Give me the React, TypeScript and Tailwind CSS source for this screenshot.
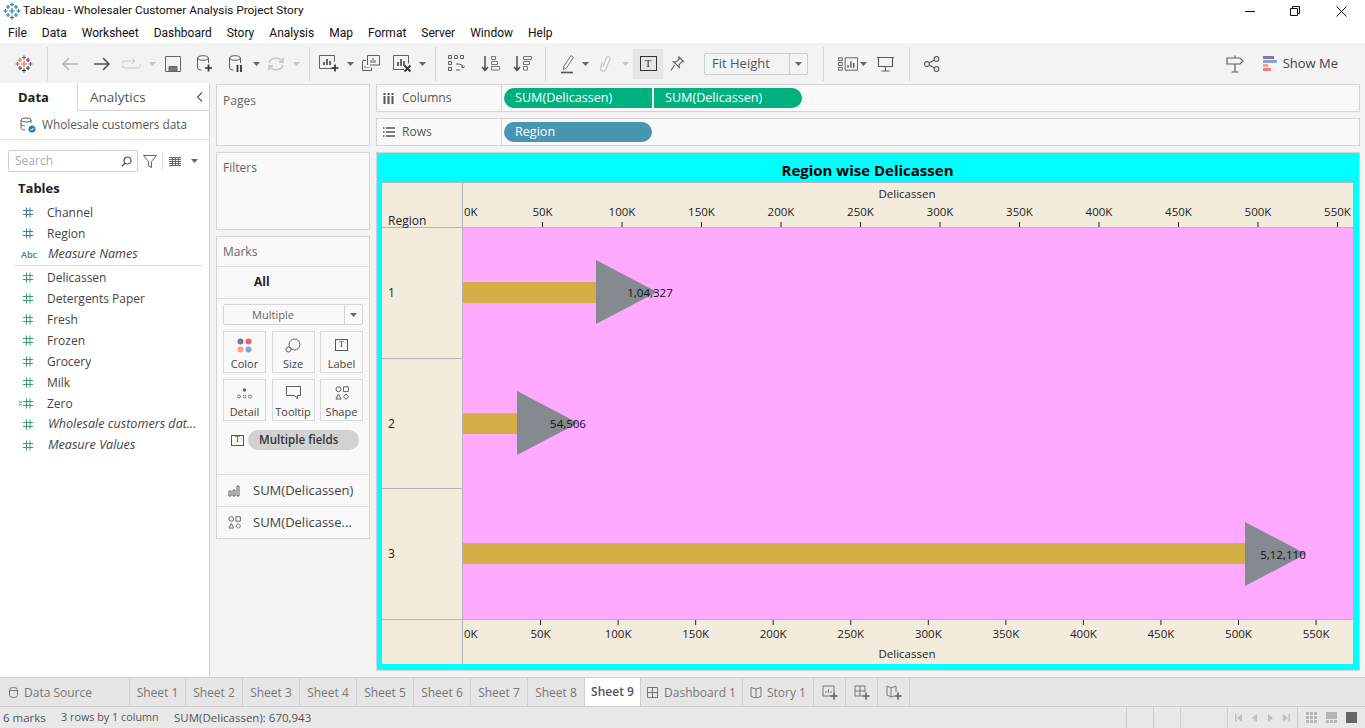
import type { ReactNode } from 'react';

const STROKE = '#5f5f5f';
const MENU = ['File', 'Data', 'Worksheet', 'Dashboard', 'Story', 'Analysis', 'Map', 'Format', 'Server', 'Window', 'Help'];
const SHEETS = ['Sheet 1', 'Sheet 2', 'Sheet 3', 'Sheet 4', 'Sheet 5', 'Sheet 6', 'Sheet 7', 'Sheet 8'];

function Icon({ w = 20, h = 20, children, stroke = STROKE, sw = 1.2 }: { w?: number; h?: number; children: ReactNode; stroke?: string; sw?: number }) {
  return (
    <svg width={w} height={h} viewBox={`0 0 ${w} ${h}`} fill="none" stroke={stroke} strokeWidth={sw}>
      {children}
    </svg>
  );
}

function Slot({ className, children }: { className: string; children?: ReactNode }) {
  return <div className={`flex h-full shrink-0 items-center justify-center ${className}`}>{children}</div>;
}

function Caret({ color = '#666' }: { color?: string }) {
  return (
    <svg width="7" height="4" viewBox="0 0 7 4">
      <path d="M0 0h7L3.5 4z" fill={color} />
    </svg>
  );
}

function Sep() {
  return <div className="h-[34px] w-px bg-[#d4d4d4]" />;
}

function Cross({ x, y, c, r = 3 }: { x: number; y: number; c: string; r?: number }) {
  return <path d={`M${x - r} ${y}H${x + r}M${x} ${y - r}V${y + r}`} stroke={c} strokeWidth="1.2" fill="none" />;
}

function TableauLogo({ mono }: { mono?: boolean }) {
  const a = mono ? '#2f7ea8' : '#e8762c';
  const b = mono ? '#2f7ea8' : '#5b6591';
  const c = mono ? '#2f7ea8' : '#c72035';
  const d = mono ? '#2f7ea8' : '#1f447e';
  const e = mono ? '#2f7ea8' : '#59879b';
  return (
    <svg width="18" height="18" viewBox="0 0 18 18">
      <Cross x={9} y={9} c={a} r={3} />
      <Cross x={5} y={5} c={a} r={2} />
      <Cross x={13} y={5} c={c} r={2} />
      <Cross x={5} y={13} c={c} r={2} />
      <Cross x={13} y={13} c={d} r={2} />
      <Cross x={9} y={2.5} c={b} r={2} />
      <Cross x={9} y={15.5} c={d} r={2} />
      <Cross x={2.5} y={9} c={e} r={2} />
      <Cross x={15.5} y={9} c={b} r={2} />
    </svg>
  );
}

function Plus({ x, y, c = '#333' }: { x: number; y: number; c?: string }) {
  return <path d={`M${x - 3.5} ${y}H${x + 3.5}M${x} ${y - 3.5}V${y + 3.5}`} stroke={c} strokeWidth="1.7" />;
}

function Toolbar() {
  return (
    <div className="flex h-[40px] shrink-0 items-center bg-[#f3f3f3] pt-px">
      <Slot className="w-[47px]"><TableauLogo /></Slot>
      <Slot className="w-px"><Sep /></Slot>
      <Slot className="ml-[6px] w-[32px]">
        <Icon w={18} h={14} stroke="#b5b5b5" sw={1.6}><path d="M17 7H2M8 1L2 7l6 6" /></Icon>
      </Slot>
      <Slot className="w-[32px]">
        <Icon w={18} h={14} stroke="#555" sw={1.6}><path d="M1 7h15M10 1l6 6-6 6" /></Icon>
      </Slot>
      <Slot className="w-[26px]">
        <Icon w={19} h={11} stroke="#c8c8c8" sw={1}><path d="M12 3H3a2.5 2.5 0 0 0 0 7h13a2.5 2.5 0 0 0 2-4M10 .5L13 3l-3 2.5" /></Icon>
      </Slot>
      <Slot className="w-[16px]"><Caret color="#c4c4c4" /></Slot>
      <Slot className="w-[26px]">
        <Icon w={16} h={16} stroke="#666" sw={1}><path d="M.5.5h15v15H.5z" /><path d="M4 15.5v-5h8v5z" fill="#777" /></Icon>
      </Slot>
      <Slot className="w-[38px]">
        <Icon w={18} h={18} sw={1}>
          <ellipse cx="7" cy="3" rx="5.5" ry="2.3" />
          <path d="M1.5 3v10c0 1.3 2 2 4 2M12.5 3v5" />
          <Plus x={12.5} y={13} />
        </Icon>
      </Slot>
      <Slot className="w-[24px]">
        <Icon w={16} h={18} sw={1}>
          <ellipse cx="7" cy="3" rx="5.5" ry="2.3" />
          <path d="M1.5 3v10c0 1.3 2 2 4 2M12.5 3v5" />
          <path d="M9.5 10v7M13 10v7" stroke="#333" strokeWidth="1.8" />
        </Icon>
      </Slot>
      <Slot className="w-[16px]"><Caret /></Slot>
      <Slot className="w-[24px]">
        <Icon w={18} h={16} stroke="#c4c4c4" sw={1.4}>
          <path d="M2 7a7 6 0 0 1 12-3l2 2M16 9a7 6 0 0 1-12 3l-2-2M16 2v4h-4M2 14v-4h4" />
        </Icon>
      </Slot>
      <Slot className="w-[16px]"><Caret color="#c4c4c4" /></Slot>
      <Slot className="w-[10px]"><Sep /></Slot>
      <Slot className="w-[32px]">
        <Icon w={22} h={18} sw={1}>
          <path d="M15 13.5H.5V.5h15v6" />
          <path d="M5 10V7M8 10V4M11 10V6" strokeWidth="1.6" stroke="#444" />
          <Plus x={16} y={13} />
        </Icon>
      </Slot>
      <Slot className="w-[8px]"><Caret /></Slot>
      <Slot className="w-[34px]">
        <Icon w={18} h={17} sw={1}>
          <path d="M5.5 10V.5h12V10H8" />
          <path d="M9 8V5M11 8V3M13 8V5" />
          <path d="M1 5.5h3M.5 5.5v10h9v-3M3 13v-2M5 13v-1M7 13v-1" />
        </Icon>
      </Slot>
      <Slot className="w-[30px]">
        <Icon w={20} h={18} sw={1}>
          <path d="M11 14.5H.5V.5h15v8" />
          <path d="M5 11V7M8 11V4M11 11V6" strokeWidth="1.6" stroke="#444" />
          <path d="M11.5 10.5l6 6M17.5 10.5l-6 6" stroke="#333" strokeWidth="1.8" />
        </Icon>
      </Slot>
      <Slot className="w-[8px]"><Caret /></Slot>
      <Slot className="w-[18px]"><Sep /></Slot>
      <Slot className="w-[26px]">
        <Icon w={19} h={18} sw={1}>
          <path d="M.5.5h3v3h-3zM6.5.5h3v3h-3zM.5 6.5h3v3h-3zM.5 12.5h3v3h-3zM12.5.5h3v3h-3z" />
          <path d="M8 9h3a4 4 0 0 1 4 4l-2-1.5M15 13l1.8-1.5M8 15h4" />
        </Icon>
      </Slot>
      <Slot className="w-[40px]">
        <Icon w={19} h={17} sw={1}>
          <path d="M4 1v14M1 12l3 3.5L7 12" stroke="#444" strokeWidth="1.4" />
          <path d="M10.500 1.5h4v3h-4zM10.500 6.5h6v3h-6zM10.500 11.5h8V15h-8z" stroke="#777" />
        </Icon>
      </Slot>
      <Slot className="w-[24px]">
        <Icon w={19} h={17} sw={1}>
          <path d="M4 1v14M1 12l3 3.5L7 12" stroke="#444" strokeWidth="1.4" />
          <path d="M10.500 1.5h8v3h-8zM10.500 6.5h6v3h-6zM10.500 11.5h4V15h-4z" stroke="#777" />
        </Icon>
      </Slot>
      <Slot className="w-[22px]"><Sep /></Slot>
      <Slot className="w-[24px]">
        <Icon w={14} h={20} sw={1}>
          <path d="M3 12L10 1.5l2.5 1.8L5.5 14l-3 1.5z" stroke="#777" />
          <path d="M0 18.5h12" stroke="#555" strokeWidth="1.6" />
        </Icon>
      </Slot>
      <Slot className="w-[10px]"><Caret /></Slot>
      <Slot className="w-[30px]">
        <Icon w={13} h={20} stroke="#c4c4c4" sw={1.1}>
          <path d="M3.5 8L1.5 14a2.800 2.800 0 0 0 5.200 1.800L11 5a2 2 0 0 0-3.700-1.300L3.800 13" />
        </Icon>
      </Slot>
      <Slot className="w-[10px]"><Caret color="#c4c4c4" /></Slot>
      <div className="ml-[3px] flex h-[30px] w-[30px] shrink-0 items-center justify-center bg-[#e6e6e6]">
        <div className="flex h-[15px] w-[17px] items-center justify-center border border-[#333] font-['Liberation_Serif',serif] text-[11px] leading-none text-[#333]">T</div>
      </div>
      <Slot className="w-[28px]">
        <Icon w={14} h={16} sw={1.1}><path d="M9 1l4.500 4.500-2 .5-2.500 3 .3 2.500-5.800-5.800L6 6l3-2.500zM4.500 9L1 14.500" /></Icon>
      </Slot>
      <div className="ml-[13px] flex h-[22px] w-[104px] shrink-0 items-center rounded-[2px] border border-[#cfcfcf] text-[13px] text-[#555]">
        <span className="flex-1 pl-[7px]">Fit Height</span>
        <span className="flex h-full w-[18px] items-center justify-center border-l border-[#cfcfcf]"><Caret /></span>
      </div>
      <Slot className="w-[30px]"><Sep /></Slot>
      <Slot className="w-[20px]">
        <Icon w={21} h={14} sw={1}>
          <path d="M.5.5h4v3h-4zM.5 5.5h4v3h-4zM.5 10.5h4v3h-4zM7.500.5h13v13h-13z" />
          <path d="M10.500 11V8M13.500 11V4M16.500 11V6" strokeWidth="1.5" />
        </Icon>
      </Slot>
      <Slot className="w-[10px]"><Caret /></Slot>
      <Slot className="w-[34px]">
        <Icon w={17} h={16}><path d="M0 1.5h17M1.500 1.5v9h14v-9M8.500 10.500V15M4.500 15h8" /></Icon>
      </Slot>
      <Slot className="w-[14px]"><Sep /></Slot>
      <Slot className="w-[32px]">
        <Icon w={16} h={16} sw={1.1}>
          <circle cx="3" cy="8" r="2.4" /><circle cx="12.5" cy="3" r="2.4" /><circle cx="12.5" cy="13" r="2.4" />
          <path d="M5 7l5.500-3M5 9l5.500 3" />
        </Icon>
      </Slot>
      <div className="flex-1" />
      <Slot className="w-[20px]">
        <Icon w={18} h={18} sw={1.2}><path d="M9 .5v2M1 3h13l3 3-3 3H1zM9 9v8M5.500 17h7" /></Icon>
      </Slot>
      <div className="ml-[18px] flex flex-col gap-[1px]">
        <div className="h-[3px] w-[11px] bg-[#8a76a0]" />
        <div className="h-[3px] w-[14px] bg-[#83a7d1]" />
        <div className="h-[3px] w-[5px] bg-[#f0a878]" />
        <div className="h-[3px] w-[8px] bg-[#f47a84]" />
      </div>
      <span className="ml-[6px] mr-[27px] text-[13px] text-[#444]">Show Me</span>
    </div>
  );
}

function Hash({ color, dashed }: { color: string; dashed?: boolean }) {
  return (
    <svg width="18" height="11" viewBox="0 0 18 11" stroke={color} strokeWidth="1">
      <path d="M10.500 .5v10M14 .5v10M7 3.500h10M7 7.500h10" />
      {dashed && <path d="M3 4h3M3 7h3" />}
    </svg>
  );
}

function Field({ name, color = '#3d9b7b', italic, dashed, abc }: { name: string; color?: string; italic?: boolean; dashed?: boolean; abc?: boolean }) {
  return (
    <div className="flex h-[21px] items-center">
      <span className="flex w-[47px] shrink-0 items-center justify-end pr-[13px]">
        {abc ? <span className="mr-[-3px] text-[9px] font-semibold text-[#4a7c9c]">Abc</span> : <Hash color={color} dashed={dashed} />}
      </span>
      <span className={`truncate text-[#444] ${italic ? 'ml-px text-[12.6px] italic' : 'text-[12px]'}`}>{name}</span>
    </div>
  );
}

function DataPane() {
  return (
    <div className="flex w-[210px] shrink-0 flex-col border-r border-[#d4d4d4] bg-white">
      <div className="flex h-[28px] shrink-0">
        <div className="flex w-[77px] items-center pl-[18px] pt-px text-[13px] font-bold text-[#222]">Data</div>
        <div className="flex flex-1 items-center justify-between border-b border-l border-[#d4d4d4] pl-[12px] pr-[6px] pt-px text-[13.5px] text-[#555]">
          <span>Analytics</span>
          <Icon w={7} h={10}><path d="M6 .5L1.500 5 6 9.500" /></Icon>
        </div>
      </div>
      <div className="flex h-[29px] shrink-0 items-center border-b border-[#e4e4e4] pl-[20px] text-[11.8px] text-[#555]">
        <Icon w={16} h={16} sw={1}>
          <ellipse cx="6" cy="3" rx="5" ry="2" />
          <path d="M1 3v8c0 1 1.500 2 4 2M11 3v3M1 7c0 1 2 2 4 2" />
          <circle cx="12" cy="12" r="3.5" fill="#2f7ea8" stroke="none" />
          <path d="M10.500 12l1.200 1.200 2-2.400" stroke="#fff" />
        </Icon>
        <span className="ml-[6px]">Wholesale customers data</span>
      </div>
      <div className="mt-[10px] flex h-[22px] shrink-0 items-center pl-[8px]">
        <div className="flex h-full w-[130px] items-center justify-between rounded-[2px] border border-[#cfcfcf] pl-[6px] pr-[5px] text-[12px] text-[#aaa]">
          <span>Search</span>
          <Icon w={11} h={11} stroke="#555"><circle cx="6.5" cy="4.5" r="3.5" /><path d="M4 7l-3 3.500" /></Icon>
        </div>
        <span className="ml-[5px] flex"><Icon w={14} h={13} stroke="#666" sw={1}><path d="M.5.5h13L8.500 6.500v6l-3-1.500V6.500z" /></Icon></span>
        <div className="ml-[5px] h-[18px] w-px bg-[#ddd]" />
        <span className="ml-[6px] flex"><Icon w={12} h={9} stroke="#666" sw={1}><path d="M0 .5h12M0 2.500h12M0 4.500h12M0 6.500h12M0 8.500h12M3.500 0v9M6.500 0v9M9.500 0v9" /></Icon></span>
        <span className="ml-[10px] flex"><Caret /></span>
      </div>
      <div className="mt-[5px] h-[22px] pl-[18px] text-[13px] font-bold leading-[22px] text-[#222]">Tables</div>
      <div className="mt-[3px]">
        <Field name="Channel" color="#3f7b9c" />
        <Field name="Region" color="#3f7b9c" />
        <Field name="Measure Names" abc italic />
      </div>
      <div className="mb-px ml-[15px] mr-[7px] h-px bg-[#dcdcdc]" />
      <Field name="Delicassen" />
      <Field name="Detergents Paper" />
      <Field name="Fresh" />
      <Field name="Frozen" />
      <Field name="Grocery" />
      <Field name="Milk" />
      <Field name="Zero" dashed />
      <Field name="Wholesale customers dat..." italic />
      <Field name="Measure Values" italic />
    </div>
  );
}

function MarkCard({ label, children }: { label: string; children: ReactNode }) {
  return (
    <div className="flex h-[42px] flex-col items-center border border-[#d9d9d9]">
      <div className="flex h-[26px] items-center justify-center">{children}</div>
      <span className="text-[11px] leading-[12px] text-[#444]">{label}</span>
    </div>
  );
}

function ShapeIcon({ size = 14 }: { size?: number }) {
  return (
    <svg width={size} height={size} viewBox="0 0 14 14" fill="none" stroke={STROKE} strokeWidth="1">
      <circle cx="3.5" cy="3.2" r="2.5" />
      <path d="M8.500.8h4.800v4.800H8.500zM3.500 8L6 13H1zM11 8l2.600 2.700L11 13.400l-2.600-2.700z" />
    </svg>
  );
}

function Card({ className, children }: { className: string; children: ReactNode }) {
  return <div className={`border border-[#d4d4d4] bg-[#f9f9f9] ${className}`}>{children}</div>;
}

function CardsPane() {
  return (
    <div className="ml-[6px] flex w-[154px] shrink-0 flex-col gap-[6px] pt-px">
      <Card className="h-[62px] px-[6px] pt-[7px] text-[12px] text-[#666]">Pages</Card>
      <Card className="h-[78px] px-[6px] pt-[6px] text-[12px] text-[#666]">Filters</Card>
      <Card className="flex h-[303px] flex-col">
        <div className="flex h-[30px] shrink-0 items-center border-b border-[#dedede] px-[6px] text-[12px] text-[#666]">Marks</div>
        <div className="flex h-[32px] shrink-0 items-center border-b border-[#dedede] pb-[2px] pl-[37px] text-[12px] font-bold text-[#222]">All</div>
        <div className="mx-[6px] mt-[5px] flex h-[21px] shrink-0 items-center rounded-[2px] border border-[#d4d4d4] text-[11px] text-[#666]">
          <span className="flex-1 pr-[22px] pt-px text-center">Multiple</span>
          <span className="flex h-full w-[18px] items-center justify-center border-l border-[#d4d4d4]"><Caret /></span>
        </div>
        <div className="mx-[6px] mt-[6px] grid grid-cols-[43px_43px_43px] justify-between gap-y-[6px]">
          <MarkCard label="Color">
            <svg width="15" height="15" viewBox="0 0 15 15">
              <circle cx="3.5" cy="3.5" r="3" fill="#8a6a9b" />
              <circle cx="11.5" cy="3.5" r="3" fill="#f0606e" />
              <circle cx="3.5" cy="11.5" r="3" fill="#f2a679" />
              <circle cx="11.5" cy="11.5" r="3" fill="#7fa6d4" />
            </svg>
          </MarkCard>
          <MarkCard label="Size">
            <Icon w={16} h={15} sw={1}><circle cx="9.5" cy="6.5" r="5.5" /><circle cx="3.5" cy="11.5" r="2.5" fill="#f9f9f9" /></Icon>
          </MarkCard>
          <MarkCard label="Label">
            <div className="flex h-[12px] w-[13px] items-center justify-center border border-[#555] font-['Liberation_Serif',serif] text-[8px] leading-none text-[#333]">T</div>
          </MarkCard>
          <MarkCard label="Detail">
            <svg width="15" height="11" viewBox="0 0 15 11" fill="none" stroke={STROKE} strokeWidth=".8">
              <circle cx="7.5" cy="2" r="1.7" fill="#666" stroke="none" />
              <circle cx="2" cy="8.5" r="1.5" /><circle cx="7.5" cy="8.5" r="1.5" /><circle cx="13" cy="8.5" r="1.5" />
            </svg>
          </MarkCard>
          <MarkCard label="Tooltip">
            <Icon w={15} h={14} sw={1}><path d="M.5.5h14v9h-3V13l-3-3.500H.5z" /></Icon>
          </MarkCard>
          <MarkCard label="Shape"><ShapeIcon /></MarkCard>
        </div>
        <div className="mt-[9px] flex h-[20px] shrink-0 items-center pl-[14px]">
          <div className="flex h-[11px] w-[13px] items-center justify-center border border-[#555] font-['Liberation_Serif',serif] text-[8px] leading-none text-[#333]">T</div>
          <div className="ml-[4px] flex h-[20px] w-[111px] items-center rounded-full bg-[#d2d2d2] pl-[11px] text-[11.6px] font-semibold text-[#333]">Multiple fields</div>
        </div>
        <div className="mt-[24px] flex h-[32px] shrink-0 items-center border-t border-[#dedede] pl-[11px] text-[13px] text-[#444]">
          <Icon w={12} h={12} sw={1}><path d="M1 6h2v5H1zM5 5h2v6H5zM9 1h2v10H9z" /></Icon>
          <span className="ml-[13px]">SUM(Delicassen)</span>
        </div>
        <div className="flex h-[32px] shrink-0 items-center border-t border-[#dedede] pl-[11px] text-[13px] text-[#444]">
          <ShapeIcon size={13} />
          <span className="ml-[12px]">SUM(Delicasse...</span>
        </div>
      </Card>
    </div>
  );
}

function Shelf({ label, icon, children }: { label: string; icon: ReactNode; children: ReactNode }) {
  return (
    <div className="flex h-[28px] shrink-0 border border-[#d4d4d4] bg-[#f9f9f9]">
      <div className="flex w-[125px] shrink-0 items-center border-r border-[#d4d4d4] pl-[6px] text-[12px] text-[#555]">
        <span className="flex w-[19px]">{icon}</span>
        {label}
      </div>
      <div className="flex items-center gap-[2px] pl-[2px]">{children}</div>
    </div>
  );
}

function Pill({ text, color, className }: { text: string; color: string; className: string }) {
  return <div className={`flex h-[20px] items-center pl-[11px] text-[12.6px] text-white ${color} ${className}`}>{text}</div>;
}

const TOP_TICKS = Array.from({ length: 12 }, (_, i) => ({ x: i * 79.5, label: `${i * 50}K` }));
const BOTTOM_TICKS = Array.from({ length: 12 }, (_, i) => ({ x: i * 77.55, label: `${i * 50}K` }));

const MARKS = [
  { y: 64, barY: 54, end: 134, label: '1,04,327', tx: 187 },
  { y: 195, barY: 185, end: 55, label: '54,506', tx: 105 },
  { y: 326, barY: 315, end: 783, label: '5,12,110', tx: 820 },
];

function TopAxis() {
  return (
    <svg width="890" height="44" viewBox="0 0 890 44" className="block" fontFamily="'Open Sans', sans-serif" fontSize="11.5" fill="#222">
      <text x="444" y="15" textAnchor="middle">Delicassen</text>
      {TOP_TICKS.map((t, i) => (
        <g key={t.label}>
          <text x={i === 0 ? 1 : t.x} y="33" textAnchor={i === 0 ? 'start' : 'middle'}>{t.label}</text>
          {i > 0 && <path d={`M${t.x} 39v5`} stroke="#222" />}
        </g>
      ))}
    </svg>
  );
}

function BottomAxis() {
  return (
    <svg width="890" height="44" viewBox="0 0 890 44" className="block" fontFamily="'Open Sans', sans-serif" fontSize="11.5" fill="#222">
      <text x="444" y="38" textAnchor="middle">Delicassen</text>
      {BOTTOM_TICKS.map((t, i) => (
        <g key={t.label}>
          <text x={i === 0 ? 1 : t.x} y="18" textAnchor={i === 0 ? 'start' : 'middle'}>{t.label}</text>
          {i > 0 && <path d={`M${t.x} 0v5`} stroke="#222" />}
        </g>
      ))}
    </svg>
  );
}

function Plot() {
  return (
    <svg width="890" height="391" viewBox="0 0 890 391" className="block" fontFamily="'Open Sans', sans-serif" fontSize="11.5" fill="#111">
      {MARKS.map((m) => (
        <g key={m.label}>
          <rect x="0" y={m.barY} width={m.end} height="21" fill="#d4af45" />
          <path d={`M${m.end - 1} ${m.y - 32}L${m.end + 60} ${m.y}L${m.end - 1} ${m.y + 32}z`} fill="#848a8f" />
          <text x={m.tx} y={m.y + 5} textAnchor="middle">{m.label}</text>
        </g>
      ))}
    </svg>
  );
}

function Viz() {
  const cell = 'flex items-center pl-[6px] text-[12px] text-[#222]';
  return (
    <div className="flex h-[519px] shrink-0 flex-col border border-[#d4d4d4] bg-[#00ffff] pl-[5px] pr-[6px]">
      <div className="flex h-[29px] shrink-0 items-end justify-center pb-[2px] text-[15px] font-bold leading-[20px] text-black">Region wise Delicassen</div>
      <div className="flex h-[482px] shrink-0 flex-col bg-[#f3ecdc]">
        <div className="flex h-[46px] shrink-0 border-y border-[#b5b5b5]">
          <div className="flex w-[81px] shrink-0 items-end border-r border-[#b5b5b5] pl-[6px] text-[12px] leading-[12px] text-[#222]">Region</div>
          <TopAxis />
        </div>
        <div className="flex h-[391px] shrink-0">
          <div className="grid w-[81px] shrink-0 grid-rows-[130px_130px_131px] border-r border-[#b5b5b5]">
            <div className={cell}>1</div>
            <div className={`${cell} border-t border-[#b5b5b5]`}>2</div>
            <div className={`${cell} border-t border-[#b5b5b5]`}>3</div>
          </div>
          <div className="flex-1 bg-[#ffa9ff]"><Plot /></div>
        </div>
        <div className="flex h-[45px] shrink-0 border-t border-[#b5b5b5]">
          <div className="w-[81px] shrink-0 border-r border-[#b5b5b5]" />
          <BottomAxis />
        </div>
      </div>
    </div>
  );
}

function SheetTab({ text, className = 'w-[57px]', active, children }: { text?: string; className?: string; active?: boolean; children?: ReactNode }) {
  return (
    <div className={`flex h-full shrink-0 items-center justify-center border-r border-[#cfcfcf] text-[12px] ${active ? 'bg-white pb-px font-semibold text-[#555]' : 'pt-px text-[#777]'} ${className}`}>
      {children}
      {text}
    </div>
  );
}

function Tabs() {
  return (
    <div className="flex h-[30px] shrink-0 border-y border-[#cfcfcf] bg-[#e6e6e6]">
      <SheetTab text="Data Source" className="w-[130px] !justify-start pl-[9px]">
        <span className="mr-[6px] flex"><Icon w={9} h={11} stroke="#777" sw={1}><path d="M.5 2.500a4 2 0 0 1 8 0v6a4 2 0 0 1-8 0zM.5 3.500h8" /></Icon></span>
      </SheetTab>
      {SHEETS.map((s, i) => <SheetTab key={s} text={s} className={i === 0 ? 'w-[56px]' : 'w-[57px]'} />)}
      <SheetTab text="Sheet 9" active className="w-[56px]" />
      <SheetTab text="Dashboard 1" className="w-[102px]">
        <span className="mr-[6px] flex"><Icon w={11} h={11} stroke="#777" sw={1}><path d="M.5.5h10v10H.5zM.5 5.500h10M5.500.5v10" /></Icon></span>
      </SheetTab>
      <SheetTab text="Story 1" className="w-[71px]">
        <span className="mr-[5px] flex"><Icon w={12} h={11} stroke="#777" sw={1}><path d="M6 2L1 .5v9L6 11l5-1.500v-9zM6 2v9" /></Icon></span>
      </SheetTab>
      <SheetTab className="w-[32px]">
        <Icon w={16} h={15} stroke="#777" sw={1}><path d="M10 11H1V1h11v6M4 8V6M6.500 8V4M9 8V6" /><Plus x={12} y={11} c="#666" /></Icon>
      </SheetTab>
      <SheetTab className="w-[32px]">
        <Icon w={16} h={15} stroke="#777" sw={1}><path d="M8 11H1V1h10v6M1 6h10M6 1v10" /><Plus x={12} y={11} c="#666" /></Icon>
      </SheetTab>
      <SheetTab className="w-[32px]">
        <Icon w={16} h={15} stroke="#777" sw={1}><path d="M5 3L1 1v9l4 2 3-1M5 3l5-2v6M5 3v9" /><Plus x={12} y={11} c="#666" /></Icon>
      </SheetTab>
    </div>
  );
}

function StatusBar() {
  return (
    <div className="flex h-[21px] shrink-0 items-center bg-[#e8e8e8] text-[11.5px] text-[#555]">
      <span className="ml-[3px] w-[58px]">6 marks</span>
      <span className="w-[113px] text-[10.8px]">3 rows by 1 column</span>
      <span>SUM(Delicassen): 670,943</span>
      <div className="flex-1" />
      <div className="h-full w-[27px] border-l border-[#d0d0d0]" />
      <div className="h-full w-[27px] border-l border-[#d0d0d0]" />
      <div className="h-full w-[47px] border-l border-[#d0d0d0]" />
      <div className="flex h-full w-[71px] items-center justify-around border-x border-[#d0d0d0] px-[2px]">
        <svg width="7" height="8" viewBox="0 0 7 8" fill="#c0c0c0"><path d="M0 0h1.500v8H0zM7 0v8L2 4z" /></svg>
        <svg width="5" height="8" viewBox="0 0 5 8" fill="#c0c0c0"><path d="M5 0v8L0 4z" /></svg>
        <svg width="5" height="8" viewBox="0 0 5 8" fill="#c0c0c0"><path d="M0 0v8l5-4z" /></svg>
        <svg width="7" height="8" viewBox="0 0 7 8" fill="#c0c0c0"><path d="M5.500 0H7v8H5.500zM0 0v8l5-4z" /></svg>
      </div>
      <div className="flex h-full w-[67px] items-center gap-[9px] pl-[8px]">
        <svg width="11" height="11" viewBox="0 0 11 11" fill="#b5b5b5"><path d="M0 0h3v3H0zM4 0h3v3H4zM8 0h3v3H8zM0 4h3v3H0zM4 4h3v3H4zM8 4h3v3H8zM0 8h3v3H0zM4 8h3v3H4zM8 8h3v3H8z" /></svg>
        <svg width="11" height="11" viewBox="0 0 11 11" fill="#b5b5b5"><path d="M0 0h11v7H0zM0 8h3v3H0zM4 8h3v3H4zM8 8h3v3H8z" /></svg>
        <div className="h-[11px] w-[11px] bg-[#666]" />
      </div>
    </div>
  );
}

export default function App() {
  return (
    <div className="flex h-screen w-screen flex-col overflow-hidden bg-white font-['Open_Sans',sans-serif]">
      <div className="flex h-[22px] shrink-0 items-center pl-[3px] font-['Roboto',sans-serif] text-[11.8px] text-[#111]">
        <TableauLogo mono />
        <span className="ml-[2px] flex-1">Tableau - Wholesaler Customer Analysis Project Story</span>
        <span className="flex w-[126px] items-center">
          <span className="ml-[6px] h-px w-[10px] bg-black" />
          <span className="ml-[35px] flex"><Icon w={10} h={10} stroke="#111" sw={1}><path d="M.5 2.500h7v7h-7zM2.500 2.500v-2h7v7h-2" /></Icon></span>
          <span className="ml-[36px] flex"><Icon w={11} h={11} stroke="#111" sw={1}><path d="M.5.5l10 10M10.500.5l-10 10" /></Icon></span>
        </span>
      </div>
      <div className="flex h-[21px] shrink-0 items-center gap-[15px] pl-[8px] font-['Roboto',sans-serif] text-[12px] text-[#111]">
        {MENU.map((m) => <span key={m}>{m}</span>)}
      </div>
      <Toolbar />
      <div className="flex h-[594px] shrink-0 bg-[#f3f3f3]">
        <DataPane />
        <CardsPane />
        <div className="ml-[6px] mr-[5px] flex min-w-0 flex-1 flex-col gap-[6px] pt-px">
          <Shelf label="Columns" icon={<Icon w={11} h={11} stroke="#555" sw={2}><path d="M1.500 3v8M5.500 3v8M9.500 3v8M1.500 0v2M5.500 0v2M9.500 0v2" /></Icon>}>
            <Pill text="SUM(Delicassen)" color="bg-[#00b180]" className="w-[148px] rounded-l-full" />
            <Pill text="SUM(Delicassen)" color="bg-[#00b180]" className="w-[148px] rounded-r-full" />
          </Shelf>
          <Shelf label="Rows" icon={<Icon w={12} h={10} stroke="#555" sw={1.5}><path d="M3 1h9M3 5h9M3 9h9M0 1h1.500M0 5h1.500M0 9h1.500" /></Icon>}>
            <Pill text="Region" color="bg-[#4996b2]" className="w-[148px] rounded-full" />
          </Shelf>
          <Viz />
        </div>
      </div>
      <Tabs />
      <StatusBar />
    </div>
  );
}
